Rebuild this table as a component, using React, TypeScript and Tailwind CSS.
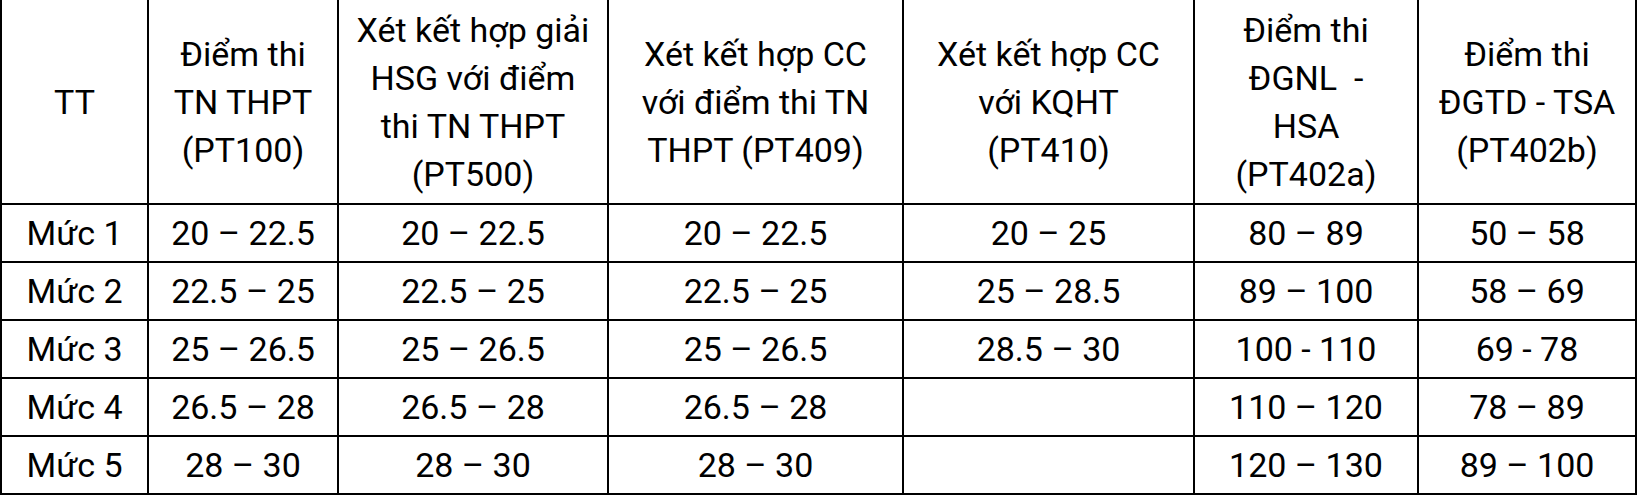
const headers: string[][] = [
  ["TT"],
  ["Điểm thi", "TN THPT", "(PT100)"],
  ["Xét kết hợp giải", "HSG với điểm", "thi TN THPT", "(PT500)"],
  ["Xét kết hợp CC", "với điểm thi TN", "THPT (PT409)"],
  ["Xét kết hợp CC", "với KQHT", "(PT410)"],
  ["Điểm thi", "ĐGNL\u00a0 -", "HSA", "(PT402a)"],
  ["Điểm thi", "ĐGTD - TSA", "(PT402b)"],
];

const rows: string[][] = [
  ["Mức 1", "20 – 22.5", "20 – 22.5", "20 – 22.5", "20 – 25", "80 – 89", "50 – 58"],
  ["Mức 2", "22.5 – 25", "22.5 – 25", "22.5 – 25", "25 – 28.5", "89 – 100", "58 – 69"],
  ["Mức 3", "25 – 26.5", "25 – 26.5", "25 – 26.5", "28.5 – 30", "100 - 110", "69 - 78"],
  ["Mức 4", "26.5 – 28", "26.5 – 28", "26.5 – 28", "", "110 – 120", "78 – 89"],
  ["Mức 5", "28 – 30", "28 – 30", "28 – 30", "", "120 – 130", "89 – 100"],
];

const colWidths = ["w-[147px]", "w-[190px]", "w-[270px]", "w-[295px]", "w-[291px]", "w-[224px]", "w-[218px]"];

export default function App() {
  return (
    <div className="w-[1642px] h-[496px] bg-white overflow-hidden font-['Roboto',sans-serif] text-black">
      <table className="table-fixed border-collapse w-[1635px] text-[34px] leading-[48px]">
        <colgroup>
          {colWidths.map((w, i) => (
            <col key={i} className={w} />
          ))}
        </colgroup>
        <thead>
          <tr className="h-[204px]">
            {headers.map((lines, i) => (
              <th key={i} className="border-2 border-t-0 border-black font-normal text-center align-middle p-0">
                {lines.map((l, j) => (
                  <div key={j}>{l}</div>
                ))}
              </th>
            ))}
          </tr>
        </thead>
        <tbody>
          {rows.map((r, i) => (
            <tr key={i} className="h-[58px]">
              {r.map((c, j) => (
                <td key={j} className="border-2 border-black text-center align-middle p-0 whitespace-nowrap">
                  {c}
                </td>
              ))}
            </tr>
          ))}
        </tbody>
      </table>
    </div>
  );
}
